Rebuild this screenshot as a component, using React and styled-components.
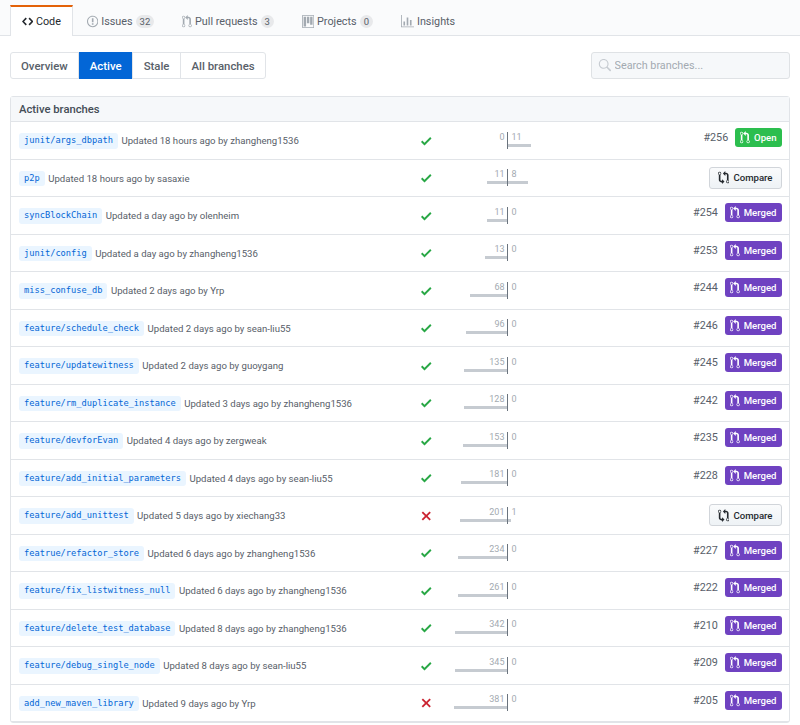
import React from 'react';
import styled, { createGlobalStyle } from 'styled-components';

const GlobalStyle = createGlobalStyle`
    html, body {
        margin: 0;
        height: 725px;
        overflow: hidden;
        background: #fff;
        font-family: Roboto, "Noto Sans", sans-serif;
        color: #24292e;
    }
`;

const paths = {
    code: ['0 0 14 16', 'M9.5 3L8 4.5 11.5 8 8 11.5 9.5 13 14 8 9.5 3zm-5 0L0 8l4.5 5L6 11.5 2.5 8 6 4.5 4.5 3z'],
    issue: ['0 0 14 16', 'M7 2.3c3.14 0 5.7 2.56 5.7 5.7s-2.56 5.7-5.7 5.7A5.71 5.71 0 0 1 1.3 8c0-3.14 2.56-5.7 5.7-5.7zM7 1C3.14 1 0 4.14 0 8s3.14 7 7 7 7-3.14 7-7-3.14-7-7-7zm1 3H6v5h2V4zm0 6H6v2h2v-2z'],
    pull: ['0 0 12 16', 'M11 11.28V5c-.03-.78-.34-1.47-.94-2.06C9.46 2.35 8.78 2.03 8 2H7V0L4 3l3 3V4h1c.27.02.48.11.69.31.21.2.3.42.31.69v6.28A1.993 1.993 0 0 0 10 15a1.993 1.993 0 0 0 1-3.72zm-1 2.92c-.66 0-1.2-.55-1.2-1.2 0-.65.55-1.2 1.2-1.2.65 0 1.2.55 1.2 1.2 0 .65-.55 1.2-1.2 1.2zM4 3c0-1.11-.89-2-2-2a1.993 1.993 0 0 0-1 3.72v6.56A1.993 1.993 0 0 0 2 15a1.993 1.993 0 0 0 1-3.72V4.72c.59-.34 1-.98 1-1.72zm-.8 10c0 .66-.55 1.2-1.2 1.2-.65 0-1.2-.55-1.2-1.2 0-.65.55-1.2 1.2-1.2.65 0 1.2.55 1.2 1.2zM2 4.2C1.34 4.2.8 3.65.8 3c0-.65.55-1.2 1.2-1.2.65 0 1.2.55 1.2 1.2 0 .65-.55 1.2-1.2 1.2z'],
    project: ['0 0 15 16', 'M10 12h3V2h-3v10zm-4-2h3V2H6v8zm-4 4h3V2H2v12zm-1 1h13V1H1v14zM14 0H1a1 1 0 0 0-1 1v14a1 1 0 0 0 1 1h13a1 1 0 0 0 1-1V1a1 1 0 0 0-1-1z'],
    graph: ['0 0 16 16', 'M16 14v1H0V0h1v14h15zM5 13H3V8h2v5zm4 0H7V3h2v10zm4 0h-2V6h2v7z'],
    compare: ['0 0 14 16', 'M5 12H4c-.27-.02-.48-.11-.69-.31-.21-.2-.3-.42-.31-.69V4.72A1.993 1.993 0 0 0 2 1a1.993 1.993 0 0 0-1 3.72V11c.03.78.34 1.47.94 2.06.6.59 1.28.91 2.06.94h1v2l3-3-3-3v2zM2 1.8c.66 0 1.2.55 1.2 1.2 0 .65-.55 1.2-1.2 1.2C1.34 4.2.8 3.65.8 3c0-.65.55-1.2 1.2-1.2zm11 9.48V5c-.03-.78-.34-1.47-.94-2.06-.6-.59-1.28-.91-2.06-.94H9V0L6 3l3 3V4h1c.27.02.48.11.69.31.21.2.3.42.31.69v6.28A1.993 1.993 0 0 0 12 15a1.993 1.993 0 0 0 1-3.72zm-1 2.92c-.66 0-1.2-.55-1.2-1.2 0-.65.55-1.2 1.2-1.2.65 0 1.2.55 1.2 1.2 0 .65-.55 1.2-1.2 1.2z'],
    check: ['0 0 12 16', 'M12 5l-8 8-4-4 1.5-1.5L4 10l6.5-6.5L12 5z'],
    x: ['0 0 12 16', 'M7.48 8l3.75 3.75-1.48 1.48L6 9.48l-3.75 3.75-1.48-1.48L4.52 8 .77 4.25l1.48-1.48L6 6.52l3.75-3.75 1.48 1.48L7.48 8z'],
    search: ['0 0 16 16', 'M15.7 13.3l-3.81-3.83A5.93 5.93 0 0 0 13 6c0-3.31-2.69-6-6-6S1 2.69 1 6s2.69 6 6 6c1.3 0 2.48-.41 3.47-1.11l3.83 3.81c.19.2.45.3.7.3.25 0 .52-.09.7-.3a.996.996 0 0 0 0-1.41v.01zM7 10.7c-2.59 0-4.7-2.11-4.7-4.7 0-2.59 2.11-4.7 4.7-4.7 2.59 0 4.7 2.11 4.7 4.7 0 2.59-2.11 4.7-4.7 4.7z'],
};

function Octicon({ name, height = 14 }) {
    const [viewBox, d] = paths[name];
    const [, , w, h] = viewBox.split(' ').map(Number);
    return (
        <svg viewBox={viewBox} height={height} width={(w / h) * height} fill="currentColor" aria-hidden="true">
            <path fillRule="evenodd" d={d} />
        </svg>
    );
}

const branches = [
    { name: 'junit/args_dbpath', when: '18 hours ago', who: 'zhangheng1536', ok: true, behind: 0, ahead: 11, lw: 0, rw: 23, pr: 256, state: 'open' },
    { name: 'p2p', when: '18 hours ago', who: 'sasaxie', ok: true, behind: 11, ahead: 8, lw: 21, rw: 20 },
    { name: 'syncBlockChain', when: 'a day ago', who: 'olenheim', ok: true, behind: 11, ahead: 0, lw: 21, rw: 0, pr: 254, state: 'merged' },
    { name: 'junit/config', when: 'a day ago', who: 'zhangheng1536', ok: true, behind: 13, ahead: 0, lw: 23, rw: 0, pr: 253, state: 'merged' },
    { name: 'miss_confuse_db', when: '2 days ago', who: 'Yrp', ok: true, behind: 68, ahead: 0, lw: 38, rw: 0, pr: 244, state: 'merged' },
    { name: 'feature/schedule_check', when: '2 days ago', who: 'sean-liu55', ok: true, behind: 96, ahead: 0, lw: 42, rw: 0, pr: 246, state: 'merged' },
    { name: 'feature/updatewitness', when: '2 days ago', who: 'guoygang', ok: true, behind: 135, ahead: 0, lw: 44, rw: 0, pr: 245, state: 'merged' },
    { name: 'feature/rm_duplicate_instance', when: '3 days ago', who: 'zhangheng1536', ok: true, behind: 128, ahead: 0, lw: 44, rw: 0, pr: 242, state: 'merged' },
    { name: 'feature/devforEvan', when: '4 days ago', who: 'zergweak', ok: true, behind: 153, ahead: 0, lw: 45, rw: 0, pr: 235, state: 'merged' },
    { name: 'feature/add_initial_parameters', when: '4 days ago', who: 'sean-liu55', ok: true, behind: 181, ahead: 0, lw: 47, rw: 0, pr: 228, state: 'merged' },
    { name: 'feature/add_unittest', when: '5 days ago', who: 'xiechang33', ok: false, behind: 201, ahead: 1, lw: 48, rw: 3 },
    { name: 'featrue/refactor_store', when: '6 days ago', who: 'zhangheng1536', ok: true, behind: 234, ahead: 0, lw: 50, rw: 0, pr: 227, state: 'merged' },
    { name: 'feature/fix_listwitness_null', when: '6 days ago', who: 'zhangheng1536', ok: true, behind: 261, ahead: 0, lw: 50, rw: 0, pr: 222, state: 'merged' },
    { name: 'feature/delete_test_database', when: '8 days ago', who: 'zhangheng1536', ok: true, behind: 342, ahead: 0, lw: 53, rw: 0, pr: 210, state: 'merged' },
    { name: 'feature/debug_single_node', when: '8 days ago', who: 'sean-liu55', ok: true, behind: 345, ahead: 0, lw: 53, rw: 0, pr: 209, state: 'merged' },
    { name: 'add_new_maven_library', when: '9 days ago', who: 'Yrp', ok: false, behind: 381, ahead: 0, lw: 54, rw: 0, pr: 205, state: 'merged' },
];

function Row({ b }) {
    return (
        <BranchRow>
            <Info>
                <BranchName>{b.name}</BranchName>
                <Meta>Updated {b.when} by {b.who}</Meta>
            </Info>
            <Status $ok={b.ok}>
                <Octicon name={b.ok ? 'check' : 'x'} height={14} />
            </Status>
            <Diverge>
                <Side $left>
                    <Count>{b.behind}</Count>
                    <Bar style={{ width: b.lw }} />
                </Side>
                <Side>
                    <Count>{b.ahead}</Count>
                    <Bar style={{ width: b.rw }} />
                </Side>
            </Diverge>
            <PrCell>
                {b.pr ? (
                    <PrLink>
                        <PrNumber>#{b.pr}</PrNumber>
                        <StateBadge $state={b.state}>
                            <Octicon name="pull" height={13} />
                            {b.state === 'open' ? 'Open' : 'Merged'}
                        </StateBadge>
                    </PrLink>
                ) : (
                    <CompareButton>
                        <Octicon name="compare" height={13} />
                        Compare
                    </CompareButton>
                )}
            </PrCell>
        </BranchRow>
    );
}

export default function App() {
    return (
        <>
            <GlobalStyle />
            <TabBar>
                <Tab $selected><Octicon name="code" height={13} />Code</Tab>
                <Tab><Octicon name="issue" height={13} />Issues<Counter>32</Counter></Tab>
                <Tab><Octicon name="pull" height={13} />Pull requests<Counter>3</Counter></Tab>
                <Tab><Octicon name="project" height={13} />Projects<Counter>0</Counter></Tab>
                <Tab><Octicon name="graph" height={13} />Insights</Tab>
            </TabBar>
            <Toolbar>
                <SubNav>
                    <SubNavItem>Overview</SubNavItem>
                    <SubNavItem $active>Active</SubNavItem>
                    <SubNavItem>Stale</SubNavItem>
                    <SubNavItem>All branches</SubNavItem>
                </SubNav>
                <SearchBox>
                    <Octicon name="search" height={13} />
                    <SearchInput placeholder="Search branches..." readOnly />
                </SearchBox>
            </Toolbar>
            <Box>
                <BoxHeader>Active branches</BoxHeader>
                {branches.map((b) => <Row key={b.name} b={b} />)}
            </Box>
        </>
    );
}

const TabBar = styled.nav`
    display: flex;
    height: 36px;
    padding: 5px 0 0 9.5px;
    box-sizing: border-box;
    background: #fafbfc;
    border-bottom: 1px solid #e1e4e8;
`;

const Tab = styled.a`
    display: flex;
    align-items: center;
    gap: 3px;
    height: ${(p) => (p.$selected ? '31px' : '30px')};
    padding: 0 ${(p) => (p.$selected ? '11px' : '13px')};
    box-sizing: border-box;
    font-size: 10.8px;
    white-space: nowrap;
    color: ${(p) => (p.$selected ? '#24292e' : '#586069')};
    background: ${(p) => (p.$selected ? '#fff' : 'transparent')};
    border: 1px solid ${(p) => (p.$selected ? '#e1e4e8' : 'transparent')};
    border-top: ${(p) => (p.$selected ? '2px solid #e36209' : '2px solid transparent')};
    border-bottom: 0;
    svg {
        color: ${(p) => (p.$selected ? '#24292e' : '#a3aab1')};
    }
`;

const Counter = styled.span`
    padding: 0 4px;
    font-size: 9.5px;
    line-height: 13px;
    color: #586069;
    background: rgba(27, 31, 35, 0.08);
    border-radius: 14px;
`;

const Toolbar = styled.div`
    display: flex;
    justify-content: space-between;
    align-items: center;
    margin: 16px 10.5px 17px 9.5px;
`;

const SubNav = styled.div`
    display: flex;
    height: 27px;
    border: 1px solid #e1e4e8;
    border-radius: 3px;
    box-sizing: border-box;
`;

const SubNavItem = styled.a`
    display: flex;
    align-items: center;
    padding: 0 10.5px;
    font-size: 11.4px;
    font-weight: 500;
    white-space: nowrap;
    color: ${(p) => (p.$active ? '#fff' : '#586069')};
    background: ${(p) => (p.$active ? '#0366d6' : 'transparent')};
    margin: ${(p) => (p.$active ? '-1px 0' : '0')};
    & + & {
        border-left: 1px solid #e1e4e8;
    }
`;

const SearchBox = styled.label`
    display: flex;
    align-items: center;
    gap: 4px;
    width: 199px;
    height: 27px;
    padding-left: 6px;
    box-sizing: border-box;
    background: #f6f8fa;
    border: 1px solid #dfe2e5;
    border-radius: 3px;
    color: #c6cbd1;
`;

const SearchInput = styled.input`
    flex: 1;
    min-width: 0;
    border: 0;
    outline: 0;
    padding: 0;
    background: transparent;
    font: 10.8px Roboto, "Noto Sans", sans-serif;
    &::placeholder {
        color: #a3aab1;
        opacity: 1;
    }
`;

const Box = styled.section`
    margin: 0 10.5px 0 9.5px;
    border: 1px solid #e1e4e8;
    border-radius: 3px;
`;

const BoxHeader = styled.h3`
    margin: 0;
    height: 24px;
    padding-left: 8.5px;
    display: flex;
    align-items: center;
    background: #f6f8fa;
    font-size: 11.25px;
    font-weight: 500;
    color: #444d56;
    border-bottom: 1px solid #e1e4e8;
`;

const BranchRow = styled.div`
    display: grid;
    grid-template-columns: 399px 34px 128px 1fr;
    align-items: center;
    height: 37.53px;
    box-sizing: border-box;
    padding-right: 7px;
    border-bottom: 1px solid #e1e4e8;
`;

const Info = styled.div`
    display: flex;
    align-items: center;
    gap: 3.5px;
    padding: 1px 0 0 8.5px;
    white-space: nowrap;
`;

const BranchName = styled.span`
    padding: 0 5px;
    line-height: 15.5px;
    font-family: "DejaVu Sans Mono", "Liberation Mono", monospace;
    font-size: 8.7px;
    color: #0366d6;
    background: #eaf5ff;
    border-radius: 3px;
`;

const Meta = styled.span`
    font-size: 9.6px;
    color: #586069;
`;

const Status = styled.div`
    display: flex;
    justify-content: center;
    padding-top: 1px;
    color: ${(p) => (p.$ok ? '#28a745' : '#cb2431')};
`;

const Diverge = styled.div`
    position: relative;
    display: grid;
    grid-template-columns: 1fr 1fr;
    height: 17px;
    &::after {
        content: '';
        position: absolute;
        left: calc(50% - 0.5px);
        top: 0;
        bottom: 0;
        width: 1px;
        background: #6a737d;
    }
`;

const Side = styled.div`
    display: flex;
    flex-direction: column;
    align-items: ${(p) => (p.$left ? 'flex-end' : 'flex-start')};
    text-align: ${(p) => (p.$left ? 'right' : 'left')};
    > span:first-child {
        ${(p) => (p.$left ? 'padding-right: 3px;' : 'padding-left: 4px;')}
    }
`;

const Count = styled.span`
    font-size: 9px;
    line-height: 11px;
    color: #a3aab1;
`;

const Bar = styled.div`
    height: 3px;
    margin-top: 1px;
    background: #c6cbd1;
`;

const PrCell = styled.div`
    display: flex;
    align-items: center;
    justify-content: flex-end;
`;

const PrLink = styled.div`
    display: flex;
    align-items: center;
    gap: 7px;
    margin-top: -5px;
`;

const PrNumber = styled.span`
    font-size: 10.8px;
    color: #586069;
`;

const StateBadge = styled.span`
    display: flex;
    align-items: center;
    gap: 4px;
    height: 19px;
    padding: 0 5px;
    font-size: 9.6px;
    font-weight: 500;
    color: #fff;
    background: ${(p) => (p.$state === 'open' ? '#2cbe4e' : '#6f42c1')};
    border-radius: 3px;
`;

const CompareButton = styled.a`
    display: flex;
    align-items: center;
    gap: 4px;
    height: 22px;
    padding: 0 8px;
    box-sizing: border-box;
    font-size: 9.6px;
    font-weight: 500;
    color: #24292e;
    background-image: linear-gradient(-180deg, #fafbfc, #eff3f6 90%);
    border: 1px solid #d1d5da;
    border-radius: 3px;
`;
